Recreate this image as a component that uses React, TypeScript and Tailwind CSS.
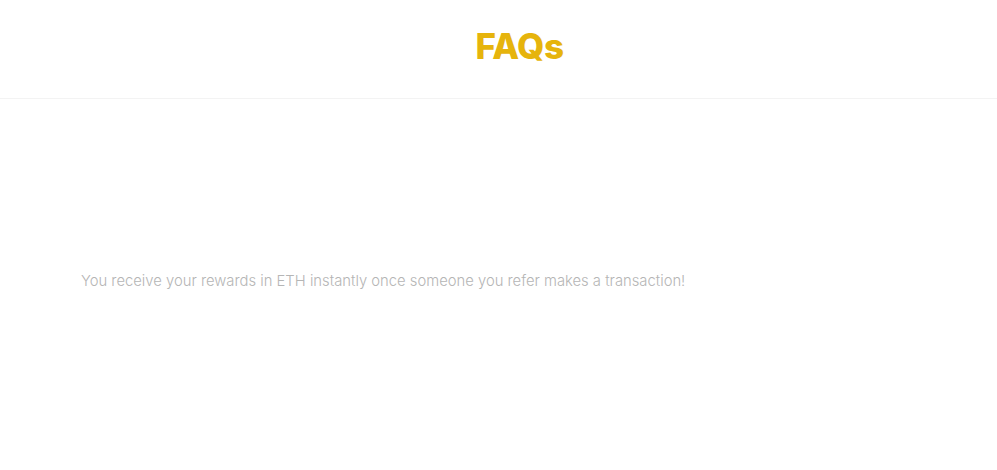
export default function App() {
  return (
    <div className="min-h-[470px] w-full bg-white font-['Inter','Liberation_Sans',sans-serif]">
      {/* Header */}
      <header className="h-[99px] border-b border-[#f3f3f3] flex items-center justify-center">
        <h1 className="text-[35px] font-extrabold tracking-[-0.5px] text-[#e6b40c] leading-none pl-[42px] pb-[6px]">
          FAQs
        </h1>
      </header>

      {/* Answer */}
      <section className="px-[81px] pt-[171px]">
        <p className="text-[14.8px] font-light text-[#b5b5b5] leading-[22px]">
          You receive your rewards in ETH instantly once someone you refer makes a transaction!
        </p>
      </section>
    </div>
  );
}
